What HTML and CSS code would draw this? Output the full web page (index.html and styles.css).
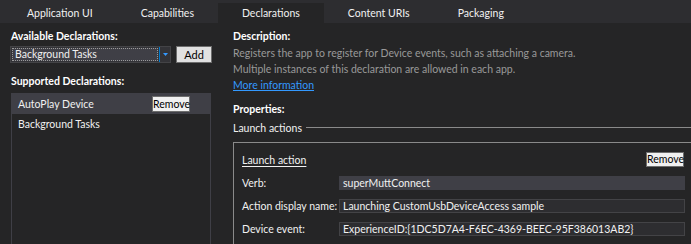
FILE: index.html
```html
<!DOCTYPE html>
<html lang="en">
<head>
  <meta charset="UTF-8" />
  <title>Package Manifest - Declarations</title>
  <link rel="stylesheet" href="styles.css">
</head>
<body>
  <div class="tabs">
    <div class="tab">Application UI</div>
    <div class="tab">Capabilities</div>
    <div class="tab active">Declarations</div>
    <div class="tab">Content URIs</div>
    <div class="tab">Packaging</div>
  </div>

  <div class="main">
    <div class="left">
      <div class="heading">Available Declarations:</div>
      <div class="add-row">
        <div class="combo">
          <span class="combo-text"><span class="focus">Background Tasks</span></span>
          <span class="combo-btn">
            <svg width="5" height="3" viewBox="0 0 5 3"><path d="M0 0h5L2.5 3z" fill="#3399ff"/></svg>
          </span>
        </div>
        <button class="btn add-btn">Add</button>
      </div>
      <div class="heading supported">Supported Declarations:</div>
      <div class="list">
        <div class="item selected">
          <span>AutoPlay Device</span>
          <button class="btn small-btn">Remove</button>
        </div>
        <div class="item">Background Tasks</div>
      </div>
    </div>

    <div class="right">
      <div class="heading">Description:</div>
      <div class="desc first">Registers the app to register for Device events, such as attaching a camera.</div>
      <div class="desc">Multiple instances of this declaration are allowed in each app.</div>
      <a class="link" href="#">More information</a>
      <div class="heading props">Properties:</div>
      <div class="group-title"><span>Launch actions</span><span class="rule"></span></div>
      <div class="action-box">
        <div class="action-head">
          <span class="action-title">Launch action</span>
          <button class="btn small-btn">Remove</button>
        </div>
        <div class="field">
          <span class="label">Verb:</span>
          <div class="input hot">superMuttConnect</div>
        </div>
        <div class="field">
          <span class="label">Action display name:</span>
          <div class="input">Launching CustomUsbDeviceAccess sample</div>
        </div>
        <div class="field">
          <span class="label">Device event:</span>
          <div class="input">ExperienceID:{1DC5D7A4-F6EC-4369-BEEC-95F386013AB2}</div>
        </div>
      </div>
    </div>
  </div>
</body>
</html>
```

FILE: styles.css
```css
* { margin: 0; padding: 0; box-sizing: border-box; }
html, body {
  width: 691px;
  height: 244px;
  overflow: hidden;
  background-color: #252526;
  color: #f1f1f1;
  font-family: Lato, "Liberation Sans", sans-serif;
  font-size: 10.5px;
}
.tabs {
  display: flex;
  height: 23px;
  padding-left: 3px;
  background-color: #2d2d30;
}
.tab {
  padding: 0 24px;
  line-height: 20px;
  margin-top: 3px;
  white-space: nowrap;
}
.tab.active { background-color: #252526; }

.main {
  display: flex;
  height: 221px;
  overflow: hidden;
}
.left {
  width: 213px;
  padding: 5px 0 0 10px;
  display: flex;
  flex-direction: column;
}
.heading {
  font-weight: bold;
  line-height: 16px;
  padding-left: 1px;
  color: #fff;
}
.add-row {
  display: flex;
  gap: 5px;
  margin-top: 2px;
}
.combo {
  display: flex;
  width: 161px;
  height: 17px;
  border: 1px solid #434346;
  background-color: #333337;
}
.combo-text {
  flex: 1;
  padding: 1px;
}
.focus {
  display: block;
  height: 13px;
  line-height: 11px;
  padding-left: 2px;
  border: 1px dotted #9a9a9a;
  background-color: #3f3f46;
}
.combo-btn {
  width: 11px;
  border-left: 1px solid #007acc;
  display: flex;
  align-items: center;
  justify-content: center;
}
.btn {
  font-family: inherit;
  font-size: 11px;
  color: #000;
  background-color: #e1e1e1;
  border: 1px solid #6d6d6d;
  padding: 0;
  text-align: center;
  cursor: pointer;
}
.add-btn {
  width: 36px;
  height: 17px;
  line-height: 14px;
}
.small-btn {
  width: 38px;
  height: 16px;
  line-height: 13px;
  font-size: 10.5px;
  background-color: #f0f0f0;
}
.supported { margin-top: 10px; }
.list {
  flex: 1;
  margin: 4px 0 0 1px;
  width: 200px;
  border: 1px solid #3f3f46;
  border-bottom: none;
}
.item {
  display: flex;
  align-items: center;
  justify-content: space-between;
  height: 20px;
  padding: 0 20px 0 6px;
}
.item.selected { background-color: #3f3f46; }

.right {
  flex: 1;
  margin-left: 20px;
  padding-top: 5px;
  display: flex;
  flex-direction: column;
}
.right .heading { padding-left: 0; }
.desc {
  line-height: 16px;
  color: #999;
}
.desc.first { margin-top: 1px; }
.link {
  line-height: 16px;
  color: #3399ff;
  align-self: flex-start;
}
.props { margin-top: 8px; }
.group-title {
  display: flex;
  align-items: center;
  gap: 4px;
  margin-top: 3px;
  line-height: 16px;
}
.rule {
  flex: 1;
  height: 1px;
  margin-top: -1px;
  background-color: #8a8a8a;
}
.action-box {
  flex: 1;
  margin: 6px -1px 0 0;
  padding: 9px 6px 0 8px;
  border: 1px solid #8a8a8a;
  border-bottom: none;
}
.action-head {
  display: flex;
  align-items: center;
  justify-content: space-between;
  height: 15px;
}
.action-head .small-btn { margin-right: 1px; height: 15px; }
.action-title {
  text-decoration: underline;
  text-underline-offset: 2px;
}
.field {
  display: flex;
  align-items: center;
  margin-top: 9px;
}
.label { width: 97px; white-space: nowrap; }
.input {
  flex: 1;
  height: 14px;
  line-height: 12px;
  padding-left: 3px;
  background-color: #2d2d30;
  border: 1px solid #434346;
  white-space: nowrap;
  overflow: hidden;
}
.input.hot {
  background-color: #3f3f46;
  border-color: #3f3f46;
}
```
